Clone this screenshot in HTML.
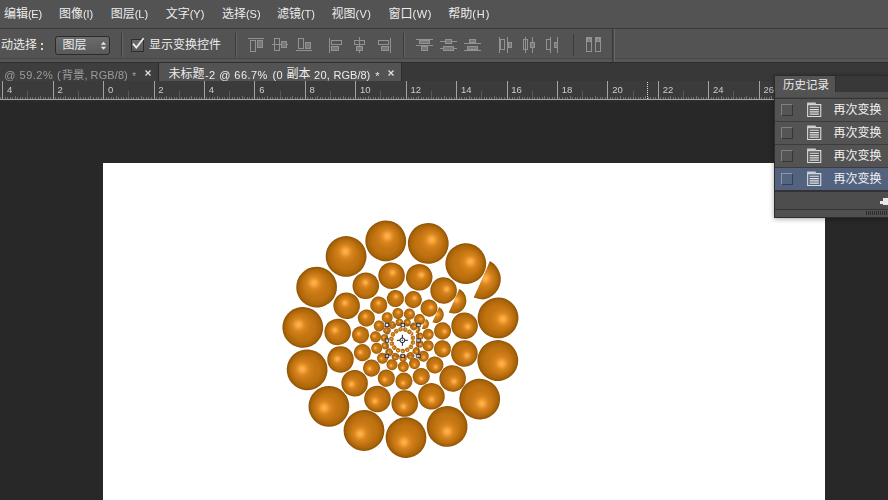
<!DOCTYPE html>
<html lang="zh"><head><meta charset="utf-8"><title>Photoshop</title>
<style>
html,body{margin:0;padding:0}
body{width:888px;height:500px;overflow:hidden;position:relative;background:#282828;font-family:"Liberation Sans",sans-serif}
.a{position:absolute}
.c{position:absolute;display:block;overflow:hidden;white-space:nowrap;line-height:1.31;font-family:"Liberation Sans","Noto Sans CJK SC",sans-serif}
.l{position:absolute;white-space:nowrap;filter:grayscale(1)}
svg{display:block}
</style></head><body>

<div class="a" style="left:103px;top:163px;width:722px;height:337px;background:#fff"></div>
<svg class="a" style="left:103px;top:163px" width="722" height="337" viewBox="103 163 722 337"><defs>
<radialGradient id="g1" cx="0" cy="0" r="1" gradientUnits="userSpaceOnUse">
<stop offset="0" stop-color="#ca7b15"/><stop offset=".6" stop-color="#c17310"/><stop offset=".86" stop-color="#ad660a"/><stop offset="1" stop-color="#8e5205"/></radialGradient>
<radialGradient id="g2" cx="0.11" cy="-0.22" r=".66" gradientUnits="userSpaceOnUse">
<stop offset="0" stop-color="#ffb755"/><stop offset=".22" stop-color="#fba63e" stop-opacity=".92"/><stop offset=".55" stop-color="#e68e25" stop-opacity=".45"/><stop offset="1" stop-color="#d88420" stop-opacity="0"/></radialGradient>
<g id="s"><circle r="1" fill="url(#g1)"/><circle r="1" fill="url(#g2)"/></g>
<clipPath id="cg"><path d="M88.4 -77.1 L118.4 -87.1 L112.4 -31.1 L72.4 -41.1 Q82 -61.1 88.4 -77.1Z"/></clipPath><g id="ring"><g clip-path="url(#cg)"><use href="#s" transform="rotate(53.07) translate(0 -99.05) scale(20.4)"/></g><use href="#s" transform="rotate(77.9) translate(0 -99.05) scale(20.4)"/><use href="#s" transform="rotate(102.73) translate(0 -99.05) scale(20.4)"/><use href="#s" transform="rotate(127.56) translate(0 -99.05) scale(20.4)"/><use href="#s" transform="rotate(152.39) translate(0 -99.05) scale(20.4)"/><use href="#s" transform="rotate(177.22) translate(0 -99.05) scale(20.4)"/><use href="#s" transform="rotate(202.05) translate(0 -99.05) scale(20.4)"/><use href="#s" transform="rotate(226.88) translate(0 -99.05) scale(20.4)"/><use href="#s" transform="rotate(251.71) translate(0 -99.05) scale(20.4)"/><use href="#s" transform="rotate(276.54) translate(0 -99.05) scale(20.4)"/><use href="#s" transform="rotate(301.37) translate(0 -99.05) scale(20.4)"/><use href="#s" transform="rotate(326.2) translate(0 -99.05) scale(20.4)"/><use href="#s" transform="rotate(351.03) translate(0 -99.05) scale(20.4)"/><use href="#s" transform="rotate(15.86) translate(0 -99.05) scale(20.4)"/><use href="#s" transform="rotate(40.69) translate(0 -99.05) scale(20.4)"/></g></defs><use href="#ring" transform="translate(401.2 338.7) scale(1)"/><use href="#ring" transform="translate(401.62 339.26) scale(0.65)"/><use href="#ring" transform="translate(401.9 339.63) scale(0.42)"/><use href="#ring" transform="translate(402.07 339.87) scale(0.27)"/><use href="#ring" transform="translate(402.19 340.02) scale(0.18)"/><use href="#ring" transform="translate(402.26 340.12) scale(0.11)"/><rect x="387" y="325" width="31.5" height="31" fill="none" stroke="#334" stroke-opacity=".45" stroke-width=".8"/><rect x="385.3" y="323.3" width="3.4" height="3.4" fill="#fff" fill-opacity=".55" stroke="#1e2038" stroke-width=".8"/><rect x="401.05" y="323.3" width="3.4" height="3.4" fill="#fff" fill-opacity=".55" stroke="#1e2038" stroke-width=".8"/><rect x="416.8" y="323.3" width="3.4" height="3.4" fill="#fff" fill-opacity=".55" stroke="#1e2038" stroke-width=".8"/><rect x="385.3" y="338.8" width="3.4" height="3.4" fill="#fff" fill-opacity=".55" stroke="#1e2038" stroke-width=".8"/><rect x="416.8" y="338.8" width="3.4" height="3.4" fill="#fff" fill-opacity=".55" stroke="#1e2038" stroke-width=".8"/><rect x="385.3" y="354.3" width="3.4" height="3.4" fill="#fff" fill-opacity=".55" stroke="#1e2038" stroke-width=".8"/><rect x="401.05" y="354.3" width="3.4" height="3.4" fill="#fff" fill-opacity=".55" stroke="#1e2038" stroke-width=".8"/><rect x="416.8" y="354.3" width="3.4" height="3.4" fill="#fff" fill-opacity=".55" stroke="#1e2038" stroke-width=".8"/><g stroke="#1c2030" stroke-width="1" fill="none"><circle cx="402.4" cy="340.3" r="2.4" fill="#fff"/><path d="M402.4 334.8v3.5M402.4 342.3v3.5M396.9 340.3h3.5M404.4 340.3h3.5"/></g><circle cx="402.4" cy="340.3" r=".7" fill="#1c2030"/></svg>
<div class="a" style="left:0;top:0;width:888px;height:28px;background:#535353"></div>
<div class="a" style="left:0;top:28px;width:888px;height:1px;background:#3a3a3a"></div>
<div class="a" style="left:0;top:29px;width:888px;height:33px;background:#535353"></div>
<div class="a" style="left:0;top:58px;width:888px;height:1px;background:#484848"></div>
<div class="a" style="left:0;top:59px;width:888px;height:3px;background:#565656"></div>
<div class="a" style="left:0;top:62px;width:888px;height:1px;background:#2e2e2e"></div>
<div class="a" style="left:0;top:63px;width:888px;height:18px;background:#383838"></div>
<div class="a" style="left:0;top:63px;width:158px;height:18px;background:#3e3e3e"></div>
<div class="a" style="left:158px;top:63px;width:1px;height:18px;background:#2c2c2c"></div>
<div class="a" style="left:159px;top:63px;width:242px;height:18px;background:#535353"></div>
<div class="a" style="left:401px;top:63px;width:1px;height:18px;background:#2c2c2c"></div>
<div class="a" style="left:0;top:81px;width:888px;height:19px;background:#3b3b3b"></div>
<div class="a" style="left:0;top:100px;width:888px;height:2px;background:#2b2b2b"></div>
<span class="c" style="left:4px;top:6.7px;width:24px;height:16.8px;font-size:12px;color:#ececec;">编辑</span>
<span class="l" style="left:27.9px;top:9.39px;font-size:11px;line-height:11px;color:#ececec;letter-spacing:-0.2px">(E)</span>
<span class="c" style="left:59px;top:6.7px;width:24px;height:16.8px;font-size:12px;color:#ececec;">图像</span>
<span class="l" style="left:82.9px;top:9.39px;font-size:11px;line-height:11px;color:#ececec;letter-spacing:0px">(I)</span>
<span class="c" style="left:110.8px;top:6.7px;width:24px;height:16.8px;font-size:12px;color:#ececec;">图层</span>
<span class="l" style="left:134.7px;top:9.39px;font-size:11px;line-height:11px;color:#ececec;letter-spacing:0px">(L)</span>
<span class="c" style="left:165.8px;top:6.7px;width:24px;height:16.8px;font-size:12px;color:#ececec;">文字</span>
<span class="l" style="left:189.7px;top:9.39px;font-size:11px;line-height:11px;color:#ececec;letter-spacing:0px">(Y)</span>
<span class="c" style="left:222px;top:6.7px;width:24px;height:16.8px;font-size:12px;color:#ececec;">选择</span>
<span class="l" style="left:245.9px;top:9.39px;font-size:11px;line-height:11px;color:#ececec;letter-spacing:0px">(S)</span>
<span class="c" style="left:277px;top:6.7px;width:24px;height:16.8px;font-size:12px;color:#ececec;">滤镜</span>
<span class="l" style="left:300.9px;top:9.39px;font-size:11px;line-height:11px;color:#ececec;letter-spacing:0px">(T)</span>
<span class="c" style="left:331.5px;top:6.7px;width:24px;height:16.8px;font-size:12px;color:#ececec;">视图</span>
<span class="l" style="left:355.4px;top:9.39px;font-size:11px;line-height:11px;color:#ececec;letter-spacing:0.4px">(V)</span>
<span class="c" style="left:388.5px;top:6.7px;width:24px;height:16.8px;font-size:12px;color:#ececec;">窗口</span>
<span class="l" style="left:412.4px;top:9.39px;font-size:11px;line-height:11px;color:#ececec;letter-spacing:0.7px">(W)</span>
<span class="c" style="left:448.3px;top:6.7px;width:24px;height:16.8px;font-size:12px;color:#ececec;">帮助</span>
<span class="l" style="left:472.2px;top:9.39px;font-size:11px;line-height:11px;color:#ececec;letter-spacing:1.0px">(H)</span>
<span class="c" style="left:1px;top:37.6px;width:36px;height:16.8px;font-size:12px;color:#ececec;">动选择</span>
<div class="a" style="left:41px;top:43px;width:2px;height:2px;background:#d8d8d8"></div><div class="a" style="left:41px;top:48px;width:2px;height:2px;background:#d8d8d8"></div>
<div class="a" style="left:55px;top:36px;width:55px;height:19px;box-sizing:border-box;border:1px solid #2b2b2b;border-radius:3px;background:linear-gradient(#6b6b6b,#595959)"></div>
<span class="c" style="left:62.5px;top:37.8px;width:24px;height:16.8px;font-size:12px;color:#ececec;">图层</span>
<svg class="a" style="left:100px;top:41px" width="7" height="10" viewBox="0 0 7 10"><path fill="#e6e6e6" d="M3.5 .8 6.2 3.7H.8ZM3.5 8.8 6.2 5.7H.8Z"/></svg>
<div class="a" style="left:121px;top:33px;width:1px;height:24px;background:#3a3a3a"></div>
<div class="a" style="left:122px;top:33px;width:1px;height:24px;background:#646464"></div>
<div class="a" style="left:131px;top:39px;width:13px;height:13px;box-sizing:border-box;border:1px solid #2e2e2e;background:linear-gradient(#6a6a6a,#5a5a5a)"></div>
<svg class="a" style="left:131px;top:36px" width="16" height="16" viewBox="0 0 16 16"><path fill="none" stroke="#f0f0f0" stroke-width="1.7" d="M2 7.6 5.3 11.6 12.6 2.2"/></svg>
<span class="c" style="left:149px;top:38px;width:72px;height:16.8px;font-size:12px;color:#ececec;">显示变换控件</span>
<div class="a" style="left:235px;top:33px;width:1px;height:24px;background:#3a3a3a"></div>
<div class="a" style="left:236px;top:33px;width:1px;height:24px;background:#646464"></div>
<svg class="a" style="left:240px;top:30px" width="380" height="30" viewBox="240 30 380 30" fill="none" stroke="#929292" stroke-width="1" shape-rendering="crispEdges"><path d="M248 38.5L264 38.5"/><rect x="250.5" y="40.5" width="5" height="11"/><rect x="257.5" y="40.5" width="5" height="7" fill="#787878"/><path d="M272 44.5L288 44.5"/><rect x="274.5" y="38.5" width="5" height="12"/><rect x="281.5" y="41.5" width="5" height="6" fill="#787878"/><path d="M296 50.5L312 50.5"/><rect x="298.5" y="38.5" width="5" height="10"/><rect x="305.5" y="42.5" width="5" height="6" fill="#787878"/><path d="M329.5 38L329.5 53"/><rect x="331.5" y="40.5" width="10" height="4"/><rect x="331.5" y="46.5" width="7" height="4" fill="#787878"/><path d="M359.5 37L359.5 53"/><rect x="354.5" y="40.5" width="10" height="4"/><rect x="356.5" y="46.5" width="6" height="4" fill="#787878"/><path d="M390.5 38L390.5 53"/><rect x="378.5" y="40.5" width="10" height="4"/><rect x="381.5" y="46.5" width="7" height="4" fill="#787878"/><path d="M416 39.5L433 39.5"/><path d="M416 45.5L433 45.5"/><rect x="419.5" y="40.5" width="10" height="3" fill="#787878"/><rect x="421.5" y="46.5" width="6" height="4" fill="#787878"/><path d="M440 41.5L457 41.5"/><path d="M440 48.5L457 48.5"/><rect x="445.5" y="39.5" width="6" height="4" fill="#787878"/><rect x="443.5" y="46.5" width="10" height="4" fill="#787878"/><path d="M464 43.5L481 43.5"/><path d="M464 50.5L481 50.5"/><rect x="469.5" y="39.5" width="6" height="3" fill="#787878"/><rect x="467.5" y="46.5" width="10" height="3" fill="#787878"/><path d="M499.5 37L499.5 53"/><path d="M507.5 37L507.5 53"/><rect x="500.5" y="39.5" width="4" height="10"/><rect x="508.5" y="42.5" width="3" height="5" fill="#787878"/><path d="M525.5 37L525.5 53"/><path d="M532.5 37L532.5 53"/><rect x="523.5" y="39.5" width="4" height="10"/><rect x="530.5" y="42.5" width="4" height="5" fill="#787878"/><path d="M550.5 37L550.5 53"/><path d="M557.5 37L557.5 53"/><rect x="546.5" y="39.5" width="4" height="10"/><rect x="554.5" y="42.5" width="3" height="5" fill="#787878"/><rect x="586.5" y="37.5" width="5" height="14"/><rect x="595.5" y="37.5" width="5" height="14"/><rect x="587.5" y="38.5" width="3" height="3" fill="#787878"/><rect x="596.5" y="38.5" width="3" height="3" fill="#787878"/></svg>
<div class="a" style="left:403px;top:33px;width:1px;height:24px;background:#3a3a3a"></div>
<div class="a" style="left:404px;top:33px;width:1px;height:24px;background:#646464"></div>
<div class="a" style="left:573px;top:34px;width:1px;height:22px;background:#3a3a3a"></div>
<div class="a" style="left:612px;top:29px;width:1px;height:33px;background:#3a3a3a"></div><div class="a" style="left:613px;top:29px;width:1px;height:33px;background:#4a4a4a"></div><div class="a" style="left:614px;top:29px;width:1px;height:33px;background:#666"></div>
<span class="l" style="left:4.3px;top:69.69px;font-size:11px;line-height:11px;color:#9b9b9b;letter-spacing:.5px">@ 59.2%</span>
<span class="l" style="left:57px;top:69.69px;font-size:11px;line-height:11px;color:#9b9b9b;">(</span>
<span class="c" style="left:61.5px;top:67.7px;width:23px;height:16.1px;font-size:11.5px;color:#9b9b9b;">背景</span>
<span class="l" style="left:84.5px;top:69.69px;font-size:11px;line-height:11px;color:#9b9b9b;">,</span>
<span class="l" style="left:90.6px;top:69.69px;font-size:11px;line-height:11px;color:#9b9b9b;letter-spacing:.1px">RGB/8)</span>
<span class="l" style="left:132px;top:70.69px;font-size:11px;line-height:11px;color:#9b9b9b;">*</span>
<svg class="a" style="left:145px;top:70px" width="6" height="6" viewBox="0 0 6 6"><path stroke="#e0e0e0" stroke-width="1.3" d="M.5 .5 5.5 5.5M5.5 .5 .5 5.5"/></svg>
<span class="c" style="left:168.5px;top:66.6px;width:36px;height:16.8px;font-size:12px;color:#ececec;">未标题</span>
<span class="l" style="left:205px;top:69.69px;font-size:11px;line-height:11px;color:#ececec;letter-spacing:.45px">-2 @ 66.7%</span>
<span class="l" style="left:272.4px;top:69.69px;font-size:11px;line-height:11px;color:#ececec;letter-spacing:.4px">(0</span>
<span class="c" style="left:286.5px;top:66.6px;width:24px;height:16.8px;font-size:12px;color:#ececec;">副本</span>
<span class="l" style="left:314px;top:69.69px;font-size:11px;line-height:11px;color:#ececec;letter-spacing:.3px">20,</span>
<span class="l" style="left:333.6px;top:69.69px;font-size:11px;line-height:11px;color:#ececec;">RGB/8)</span>
<span class="l" style="left:375.2px;top:70.69px;font-size:11px;line-height:11px;color:#ececec;">*</span>
<svg class="a" style="left:388px;top:70px" width="6" height="6" viewBox="0 0 6 6"><path stroke="#e0e0e0" stroke-width="1.3" d="M.5 .5 5.5 5.5M5.5 .5 .5 5.5"/></svg>
<svg class="a" style="left:0;top:81px" width="888" height="21" viewBox="0 81 888 21" shape-rendering="crispEdges"><path stroke="#707070" stroke-width="1" fill="none" d="M0.5 100v-3M5.5 100v-3M7.5 100v-3M10.5 100v-3M12.5 100v-3M15.5 100v-4M17.5 100v-3M20.5 100v-3M22.5 100v-3M25.5 100v-3M27.5 100v-3M30.5 100v-3M32.5 100v-3M35.5 100v-3M38.5 100v-3M40.5 100v-4M43.5 100v-3M45.5 100v-3M48.5 100v-3M50.5 100v-3M55.5 100v-3M58.5 100v-3M60.5 100v-3M63.5 100v-3M65.5 100v-4M68.5 100v-3M70.5 100v-3M73.5 100v-3M75.5 100v-3M78.5 100v-3M80.5 100v-3M83.5 100v-3M85.5 100v-3M88.5 100v-3M90.5 100v-4M93.5 100v-3M96.5 100v-3M98.5 100v-3M101.5 100v-3M106.5 100v-3M108.5 100v-3M111.5 100v-3M113.5 100v-3M116.5 100v-4M118.5 100v-3M121.5 100v-3M123.5 100v-3M126.5 100v-3M128.5 100v-3M131.5 100v-3M133.5 100v-3M136.5 100v-3M138.5 100v-3M141.5 100v-4M143.5 100v-3M146.5 100v-3M148.5 100v-3M151.5 100v-3M156.5 100v-3M159.5 100v-3M161.5 100v-3M164.5 100v-3M166.5 100v-4M169.5 100v-3M171.5 100v-3M174.5 100v-3M176.5 100v-3M179.5 100v-3M181.5 100v-3M184.5 100v-3M186.5 100v-3M189.5 100v-3M191.5 100v-4M194.5 100v-3M196.5 100v-3M199.5 100v-3M201.5 100v-3M206.5 100v-3M209.5 100v-3M212.5 100v-3M214.5 100v-3M217.5 100v-4M219.5 100v-3M222.5 100v-3M224.5 100v-3M227.5 100v-3M229.5 100v-3M232.5 100v-3M234.5 100v-3M237.5 100v-3M239.5 100v-3M242.5 100v-4M244.5 100v-3M247.5 100v-3M249.5 100v-3M252.5 100v-3M257.5 100v-3M259.5 100v-3M262.5 100v-3M264.5 100v-3M267.5 100v-4M270.5 100v-3M272.5 100v-3M275.5 100v-3M277.5 100v-3M280.5 100v-3M282.5 100v-3M285.5 100v-3M287.5 100v-3M290.5 100v-3M292.5 100v-4M295.5 100v-3M297.5 100v-3M300.5 100v-3M302.5 100v-3M307.5 100v-3M310.5 100v-3M312.5 100v-3M315.5 100v-3M317.5 100v-4M320.5 100v-3M322.5 100v-3M325.5 100v-3M328.5 100v-3M330.5 100v-3M333.5 100v-3M335.5 100v-3M338.5 100v-3M340.5 100v-3M343.5 100v-4M345.5 100v-3M348.5 100v-3M350.5 100v-3M353.5 100v-3M358.5 100v-3M360.5 100v-3M363.5 100v-3M365.5 100v-3M368.5 100v-4M370.5 100v-3M373.5 100v-3M375.5 100v-3M378.5 100v-3M380.5 100v-3M383.5 100v-3M386.5 100v-3M388.5 100v-3M391.5 100v-3M393.5 100v-4M396.5 100v-3M398.5 100v-3M401.5 100v-3M403.5 100v-3M408.5 100v-3M411.5 100v-3M413.5 100v-3M416.5 100v-3M418.5 100v-4M421.5 100v-3M423.5 100v-3M426.5 100v-3M428.5 100v-3M431.5 100v-3M433.5 100v-3M436.5 100v-3M438.5 100v-3M441.5 100v-3M444.5 100v-4M446.5 100v-3M449.5 100v-3M451.5 100v-3M454.5 100v-3M459.5 100v-3M461.5 100v-3M464.5 100v-3M466.5 100v-3M469.5 100v-4M471.5 100v-3M474.5 100v-3M476.5 100v-3M479.5 100v-3M481.5 100v-3M484.5 100v-3M486.5 100v-3M489.5 100v-3M491.5 100v-3M494.5 100v-4M496.5 100v-3M499.5 100v-3M501.5 100v-3M504.5 100v-3M509.5 100v-3M512.5 100v-3M514.5 100v-3M517.5 100v-3M519.5 100v-4M522.5 100v-3M524.5 100v-3M527.5 100v-3M529.5 100v-3M532.5 100v-3M534.5 100v-3M537.5 100v-3M539.5 100v-3M542.5 100v-3M544.5 100v-4M547.5 100v-3M549.5 100v-3M552.5 100v-3M554.5 100v-3M559.5 100v-3M562.5 100v-3M565.5 100v-3M567.5 100v-3M570.5 100v-4M572.5 100v-3M575.5 100v-3M577.5 100v-3M580.5 100v-3M582.5 100v-3M585.5 100v-3M587.5 100v-3M590.5 100v-3M592.5 100v-3M595.5 100v-4M597.5 100v-3M600.5 100v-3M602.5 100v-3M605.5 100v-3M610.5 100v-3M612.5 100v-3M615.5 100v-3M617.5 100v-3M620.5 100v-4M623.5 100v-3M625.5 100v-3M628.5 100v-3M630.5 100v-3M633.5 100v-3M635.5 100v-3M638.5 100v-3M640.5 100v-3M643.5 100v-3M645.5 100v-4M648.5 100v-3M650.5 100v-3M653.5 100v-3M655.5 100v-3M660.5 100v-3M663.5 100v-3M665.5 100v-3M668.5 100v-3M670.5 100v-4M673.5 100v-3M675.5 100v-3M678.5 100v-3M681.5 100v-3M683.5 100v-3M686.5 100v-3M688.5 100v-3M691.5 100v-3M693.5 100v-3M696.5 100v-4M698.5 100v-3M701.5 100v-3M703.5 100v-3M706.5 100v-3M711.5 100v-3M713.5 100v-3M716.5 100v-3M718.5 100v-3M721.5 100v-4M723.5 100v-3M726.5 100v-3M728.5 100v-3M731.5 100v-3M733.5 100v-3M736.5 100v-3M739.5 100v-3M741.5 100v-3M744.5 100v-3M746.5 100v-4M749.5 100v-3M751.5 100v-3M754.5 100v-3M756.5 100v-3M761.5 100v-3M764.5 100v-3M766.5 100v-3M769.5 100v-3M771.5 100v-4M774.5 100v-3M776.5 100v-3M779.5 100v-3M781.5 100v-3M784.5 100v-3M786.5 100v-3M789.5 100v-3M791.5 100v-3M794.5 100v-3M797.5 100v-4M799.5 100v-3M802.5 100v-3M804.5 100v-3M807.5 100v-3M812.5 100v-3M814.5 100v-3M817.5 100v-3M819.5 100v-3M822.5 100v-4M824.5 100v-3M827.5 100v-3M829.5 100v-3M832.5 100v-3M834.5 100v-3M837.5 100v-3M839.5 100v-3M842.5 100v-3M844.5 100v-3M847.5 100v-4M849.5 100v-3M852.5 100v-3M855.5 100v-3M857.5 100v-3M862.5 100v-3M865.5 100v-3M867.5 100v-3M870.5 100v-3M872.5 100v-4M875.5 100v-3M877.5 100v-3M880.5 100v-3M882.5 100v-3M885.5 100v-3M887.5 100v-3"/><path stroke="#a2a2a2" stroke-width="1" fill="none" d="M2.5 100v-19M53.5 100v-19M103.5 100v-19M154.5 100v-19M204.5 100v-19M254.5 100v-19M305.5 100v-19M355.5 100v-19M406.5 100v-19M456.5 100v-19M507.5 100v-19M557.5 100v-19M607.5 100v-19M658.5 100v-19M708.5 100v-19M759.5 100v-19M809.5 100v-19M860.5 100v-19"/><path stroke="#585858" stroke-width="1" fill="none" d="M27.5 97v-6M78.5 97v-6M128.5 97v-6M179.5 97v-6M229.5 97v-6M280.5 97v-6M330.5 97v-6M380.5 97v-6M431.5 97v-6M481.5 97v-6M532.5 97v-6M582.5 97v-6M633.5 97v-6M683.5 97v-6M733.5 97v-6M784.5 97v-6M834.5 97v-6M885.5 97v-6"/><path stroke="#a6a6a6" stroke-width="1" d="M0 99.5H888"/><path stroke="#ddd" stroke-width="1" stroke-dasharray="1 1" d="M647.5 82V100"/></svg>
<span class="l" style="left:7.04px;top:84.96px;font-size:9.5px;line-height:9.5px;color:#cccccc;">4</span>
<span class="l" style="left:57.47px;top:84.96px;font-size:9.5px;line-height:9.5px;color:#cccccc;">2</span>
<span class="l" style="left:107.9px;top:84.96px;font-size:9.5px;line-height:9.5px;color:#cccccc;">0</span>
<span class="l" style="left:158.33px;top:84.96px;font-size:9.5px;line-height:9.5px;color:#cccccc;">2</span>
<span class="l" style="left:208.76px;top:84.96px;font-size:9.5px;line-height:9.5px;color:#cccccc;">4</span>
<span class="l" style="left:259.19px;top:84.96px;font-size:9.5px;line-height:9.5px;color:#cccccc;">6</span>
<span class="l" style="left:309.62px;top:84.96px;font-size:9.5px;line-height:9.5px;color:#cccccc;">8</span>
<span class="l" style="left:360.05px;top:84.96px;font-size:9.5px;line-height:9.5px;color:#cccccc;">10</span>
<span class="l" style="left:410.48px;top:84.96px;font-size:9.5px;line-height:9.5px;color:#cccccc;">12</span>
<span class="l" style="left:460.91px;top:84.96px;font-size:9.5px;line-height:9.5px;color:#cccccc;">14</span>
<span class="l" style="left:511.34px;top:84.96px;font-size:9.5px;line-height:9.5px;color:#cccccc;">16</span>
<span class="l" style="left:561.77px;top:84.96px;font-size:9.5px;line-height:9.5px;color:#cccccc;">18</span>
<span class="l" style="left:612.2px;top:84.96px;font-size:9.5px;line-height:9.5px;color:#cccccc;">20</span>
<span class="l" style="left:662.63px;top:84.96px;font-size:9.5px;line-height:9.5px;color:#cccccc;">22</span>
<span class="l" style="left:713.06px;top:84.96px;font-size:9.5px;line-height:9.5px;color:#cccccc;">24</span>
<span class="l" style="left:763.49px;top:84.96px;font-size:9.5px;line-height:9.5px;color:#cccccc;">26</span>
<div class="a" style="left:774px;top:75px;width:114px;height:143px;background:#2c2c2c;box-shadow:0 1px 5px rgba(0,0,0,.35)"></div>
<div class="a" style="left:775px;top:76px;width:113px;height:141px;background:#535353"></div>
<div class="a" style="left:835px;top:76px;width:53px;height:16px;background:#383838"></div>
<div class="a" style="left:835px;top:76px;width:1px;height:16px;background:#2f2f2f"></div>
<div class="a" style="left:775px;top:92px;width:113px;height:5px;background:#4f4f4f"></div>
<div class="a" style="left:776px;top:76px;width:59px;height:21px;background:#535353"></div>
<div class="a" style="left:775px;top:97px;width:113px;height:1px;background:#484848"></div><div class="a" style="left:775px;top:98px;width:113px;height:1px;background:#353535"></div>
<span class="c" style="left:783px;top:78px;width:46px;height:16.1px;font-size:11.5px;color:#ececec;">历史记录</span>
<div class="a" style="left:775px;top:121px;width:113px;height:1px;background:#3c3c3c"></div>
<div class="a" style="left:781px;top:104px;width:12px;height:12px;box-sizing:border-box;border:1px solid;border-color:#808080 #363636 #363636 #808080;background:#555555"></div>
<svg class="a" style="left:806px;top:101px" width="16" height="17" viewBox="0 0 16 17"><path fill="none" stroke="#dcdcdc" stroke-width="1.1" d="M1.65 15.5V3.65H14.75V15.5Z"/><path fill="none" stroke="#e4e4e4" stroke-width="1.1" d="M3.6 6.3H12.9M3.6 8.6H12.9M3.6 10.9H12.9M3.6 13.1H12.9"/><path fill="#cdcdcd" d="M1.1 1.5H9.8V3.6H1.1Z"/></svg>
<span class="c" style="left:833.5px;top:102.8px;width:48px;height:16.8px;font-size:12px;color:#f2f2f2;">再次变换</span>
<div class="a" style="left:775px;top:144px;width:113px;height:1px;background:#3c3c3c"></div>
<div class="a" style="left:781px;top:127px;width:12px;height:12px;box-sizing:border-box;border:1px solid;border-color:#808080 #363636 #363636 #808080;background:#555555"></div>
<svg class="a" style="left:806px;top:124px" width="16" height="17" viewBox="0 0 16 17"><path fill="none" stroke="#dcdcdc" stroke-width="1.1" d="M1.65 15.5V3.65H14.75V15.5Z"/><path fill="none" stroke="#e4e4e4" stroke-width="1.1" d="M3.6 6.3H12.9M3.6 8.6H12.9M3.6 10.9H12.9M3.6 13.1H12.9"/><path fill="#cdcdcd" d="M1.1 1.5H9.8V3.6H1.1Z"/></svg>
<span class="c" style="left:833.5px;top:125.8px;width:48px;height:16.8px;font-size:12px;color:#f2f2f2;">再次变换</span>
<div class="a" style="left:775px;top:167px;width:113px;height:1px;background:#3c3c3c"></div>
<div class="a" style="left:781px;top:150px;width:12px;height:12px;box-sizing:border-box;border:1px solid;border-color:#808080 #363636 #363636 #808080;background:#555555"></div>
<svg class="a" style="left:806px;top:147px" width="16" height="17" viewBox="0 0 16 17"><path fill="none" stroke="#dcdcdc" stroke-width="1.1" d="M1.65 15.5V3.65H14.75V15.5Z"/><path fill="none" stroke="#e4e4e4" stroke-width="1.1" d="M3.6 6.3H12.9M3.6 8.6H12.9M3.6 10.9H12.9M3.6 13.1H12.9"/><path fill="#cdcdcd" d="M1.1 1.5H9.8V3.6H1.1Z"/></svg>
<span class="c" style="left:833.5px;top:148.8px;width:48px;height:16.8px;font-size:12px;color:#f2f2f2;">再次变换</span>
<div class="a" style="left:775px;top:168px;width:113px;height:22px;background:#53637f"></div>
<div class="a" style="left:775px;top:190px;width:113px;height:1px;background:#3c3c3c"></div>
<div class="a" style="left:781px;top:173px;width:12px;height:12px;box-sizing:border-box;border:1px solid;border-color:#8a96ac #36405a #36405a #8a96ac;background:#55657f"></div>
<svg class="a" style="left:806px;top:170px" width="16" height="17" viewBox="0 0 16 17"><path fill="none" stroke="#dcdcdc" stroke-width="1.1" d="M1.65 15.5V3.65H14.75V15.5Z"/><path fill="none" stroke="#e4e4e4" stroke-width="1.1" d="M3.6 6.3H12.9M3.6 8.6H12.9M3.6 10.9H12.9M3.6 13.1H12.9"/><path fill="#cdcdcd" d="M1.1 1.5H9.8V3.6H1.1Z"/></svg>
<span class="c" style="left:833.5px;top:171.8px;width:48px;height:16.8px;font-size:12px;color:#f2f2f2;">再次变换</span>
<div class="a" style="left:775px;top:190px;width:113px;height:2px;background:#333"></div>
<div class="a" style="left:775px;top:192px;width:113px;height:17px;background:#4d4d4d"></div>
<div class="a" style="left:775px;top:209px;width:113px;height:1px;background:#333"></div>
<div class="a" style="left:775px;top:210px;width:113px;height:7px;background:#505050"></div>
<div class="a" style="left:866px;top:211px;width:22px;height:4px;background:repeating-linear-gradient(90deg,#2c2c2c 0,#2c2c2c 1px,transparent 1px,transparent 2px)"></div>
<svg class="a" style="left:880px;top:196px" width="8" height="12" viewBox="0 0 8 12"><path fill="#e8e8e8" d="M3 2H8V9H3ZM0 5H3V8H0Z"/></svg>
</body></html>
